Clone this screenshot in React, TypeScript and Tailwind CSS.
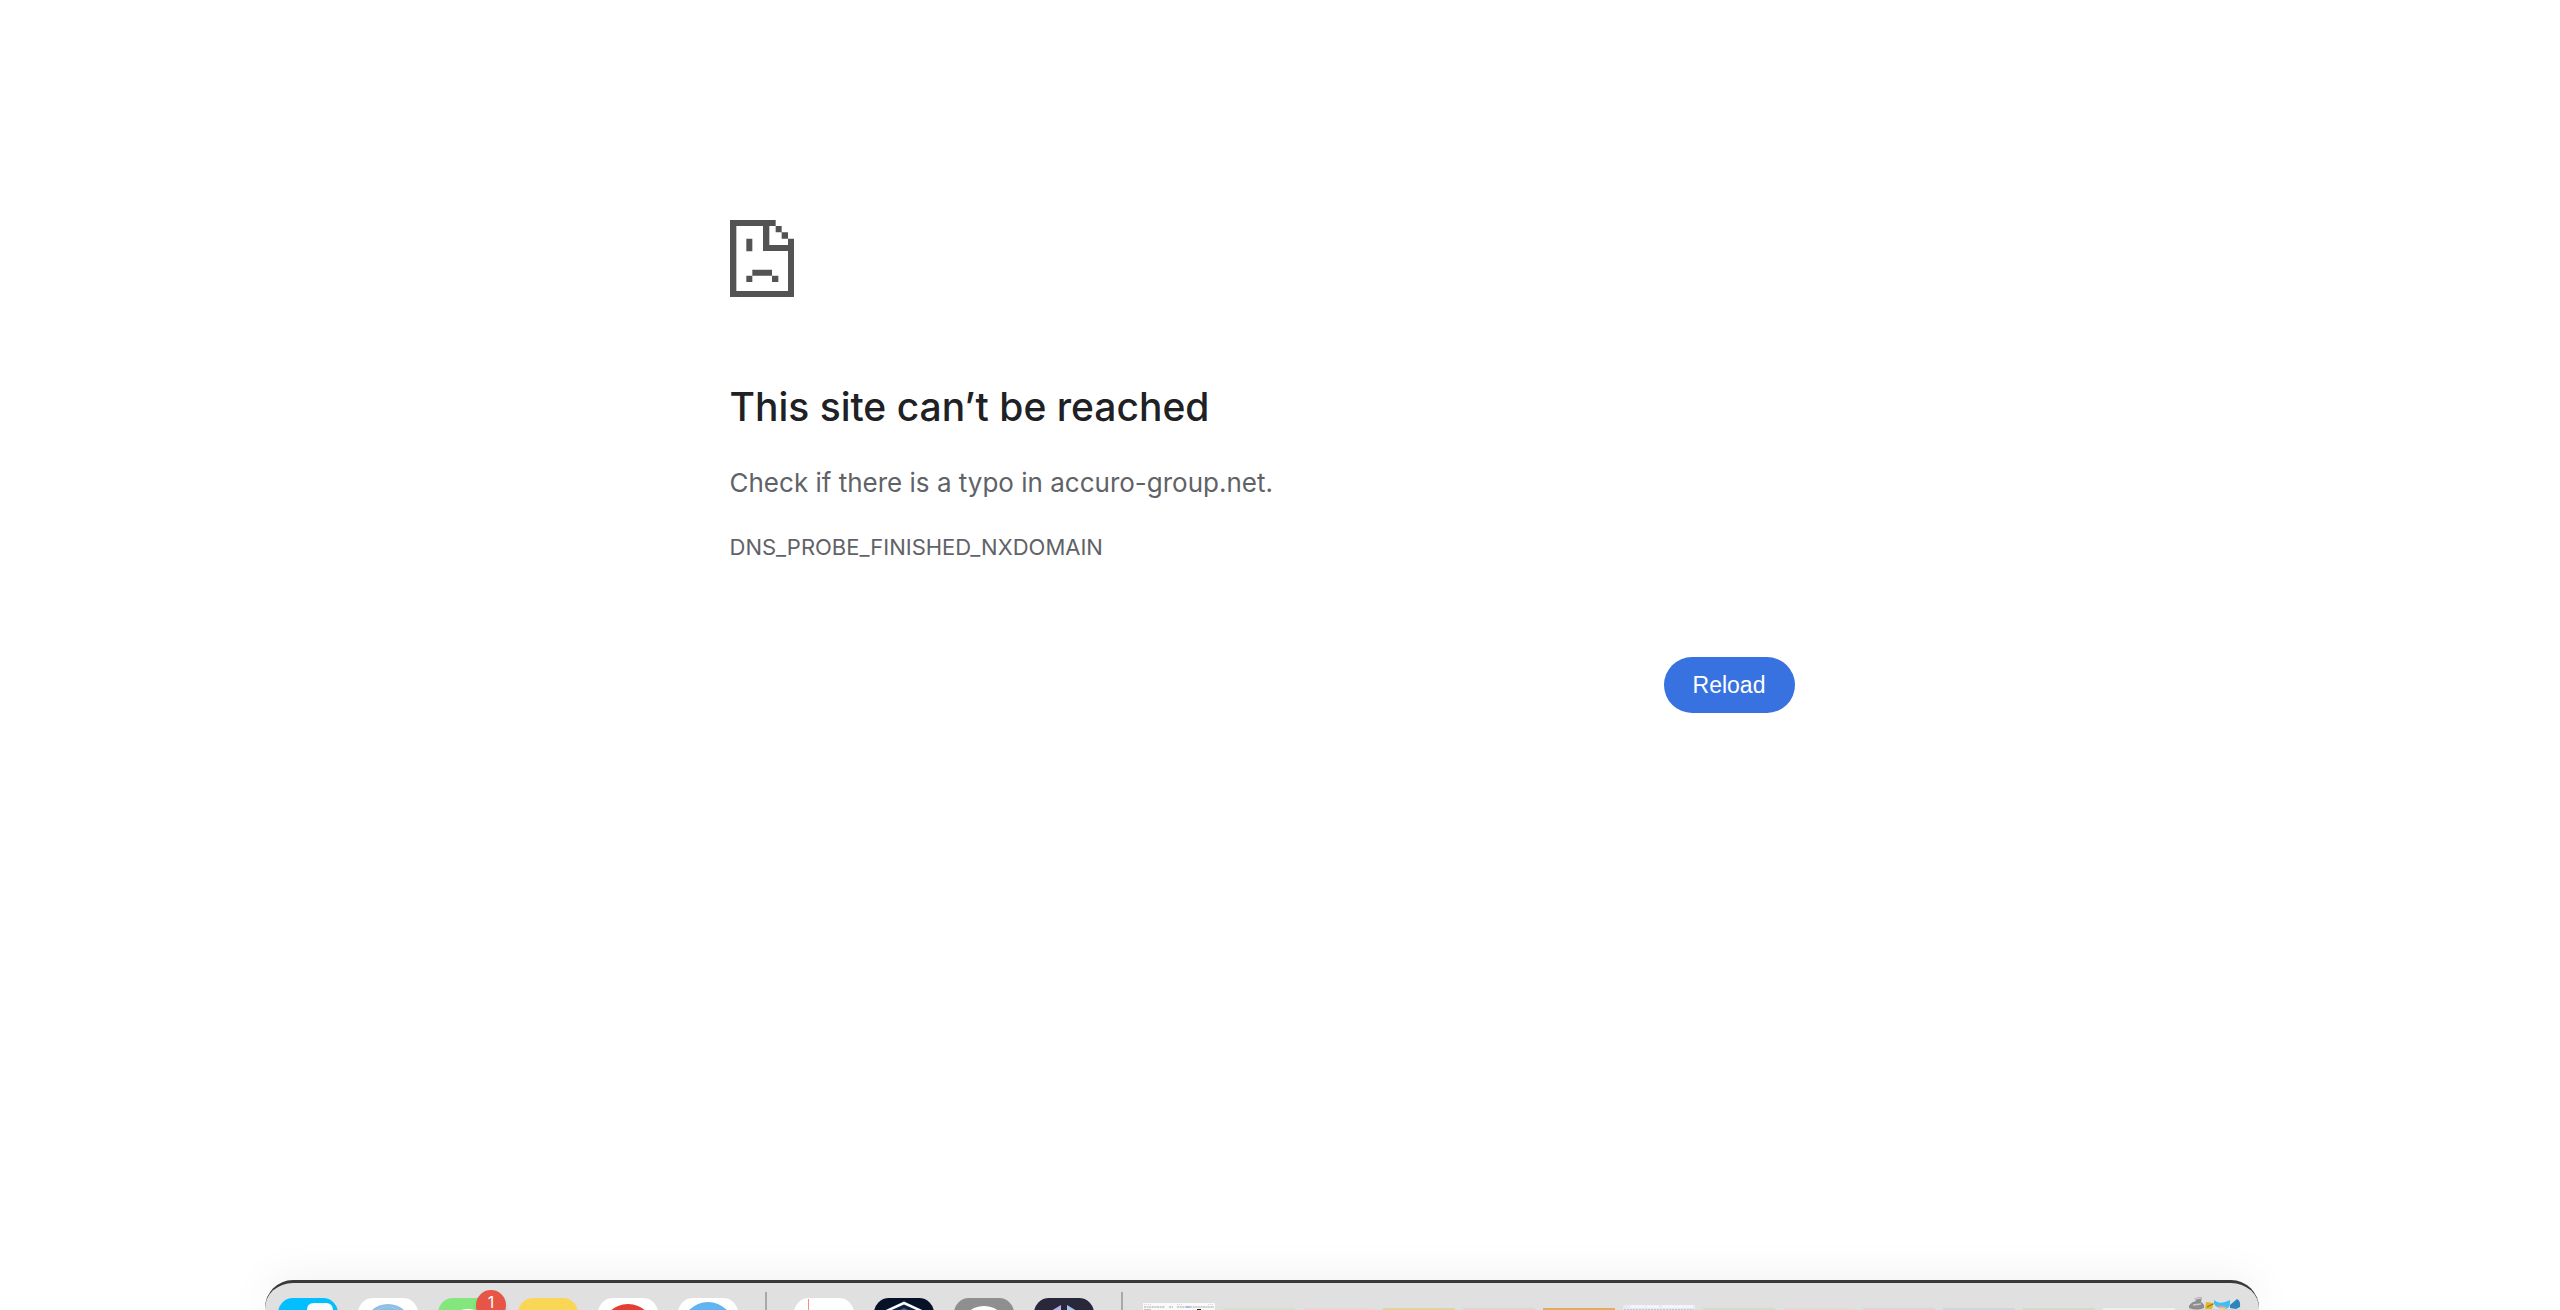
import type { ReactNode } from "react";

function SadPage() {
  return (
    <svg viewBox="0 0 192 231" className="h-[77px] w-16 fill-[#535353]" aria-hidden="true">
      <path d="M0 0H137V18H118V75H174V56H192V231H0ZM19 18V213H174V93H99V18Z" fillRule="evenodd" />
      <path d="M137 18H155V37H137ZM155 37H174V56H155Z" />
      <path d="M49 56H67V94H49ZM67 149H126V167H67ZM49 167H67V186H49ZM126 167H145V186H126Z" />
    </svg>
  );
}

function AppIcon({ label, fill, badge, children }: { label: string; fill: string; badge?: string; children?: ReactNode }) {
  return (
    <button type="button" aria-label={label} className="relative mt-[15px] block size-[60px] shrink-0">
      <svg viewBox="0 0 60 60" className="size-full" aria-hidden="true">
        <rect width="60" height="60" rx="15" fill={fill} />
        {children}
      </svg>
      {badge && (
        <span className="absolute -top-2 -right-2 flex size-[30px] justify-center rounded-full bg-[#e65545] pt-1 text-base leading-none text-white shadow-md">
          {badge}
        </span>
      )}
    </button>
  );
}

// minimized windows, left to right
const windows = [
  { name: "Mail", color: "bg-[#d4dfcd]" },
  { name: "Calendar", color: "bg-[#efd3d5]" },
  { name: "Stickies", color: "bg-[#e0d3a0]" },
  { name: "Photos", color: "bg-[#e4d2ce]" },
  { name: "Terminal", color: "bg-[#e4ac60]" },
];

const moreWindows = [
  { name: "Numbers", color: "bg-[#d2dccc]" },
  { name: "Pages", color: "bg-[#e8d8d3]" },
  { name: "Music", color: "bg-[#e4d1d5]" },
  { name: "Preview", color: "bg-[#d0d6df]" },
  { name: "Maps", color: "bg-[#d3dacb]" },
  { name: "Text", color: "bg-[#efefef]" },
];

function MiniWindow({ name, color }: { name: string; color: string }) {
  return <button type="button" aria-label={name} className={`mt-[25px] h-11 w-[72px] shrink-0 ${color}`} />;
}

function BrowserWindow() {
  return (
    <button type="button" aria-label="Browser window" className="mt-5 block h-12 w-[72px] shrink-0">
      <svg viewBox="0 0 72 48" className="size-full" aria-hidden="true">
        <rect width="72" height="48" fill="#fafafa" />
        <path d="M1 1.500H8M34 1.500H39M65 1.500H70" stroke="#d8d3cc" strokeDasharray="1 1" />
        <path d="M1 4H22M26 4H30M34 4H71" stroke="#cfcfd1" strokeWidth="2" strokeDasharray="2 .6" />
        <path d="M43 4H47" stroke="#9fc0f0" strokeWidth="2" />
        <path d="M1 6.500H8" stroke="#c4c4c6" />
        <path d="M54 6.500H58" stroke="#222" />
      </svg>
    </button>
  );
}

function SheetWindow() {
  return (
    <button type="button" aria-label="Sheet window" className="mt-[22px] block h-12 w-[72px] shrink-0">
      <svg viewBox="0 0 72 48" className="size-full" aria-hidden="true">
        <rect width="72" height="48" fill="#e8ecf2" />
        <path d="M7 1.500H22M24 1.500H36M39 1.500H70" stroke="#f6f8fb" strokeWidth="2" />
        <path d="M1 4.500H71" stroke="#bcc6d4" strokeDasharray="2 1" />
      </svg>
    </button>
  );
}

function Trash() {
  return (
    <button type="button" aria-label="Trash" className="mt-3.5 ml-auto block h-[60px] w-14 shrink-0">
      <svg viewBox="0 0 56 60" className="size-full" aria-hidden="true">
        <path d="M1 12L54 12L50 60H6Z" fill="#d4d4d4" />
        <path d="M2 9Q4 5 9 4L8 1L15 0L14 5Q18 7 17 11Q10 14 2 11Z" fill="#8d8d8d" />
        <path d="M7 2L15 1M6 8L14 7" stroke="#c9c9c9" strokeWidth="1.500" />
        <path d="M19 5L27 6L25 12H18Z" fill="#e2b52d" />
        <path d="M20 10L26 7" stroke="#80651c" />
        <path d="M27 3Q31 7 38 5L43 3Q44 10 39 12Q31 13 27 7Z" fill="#42bdf3" />
        <path d="M30 8Q34 10 39 8Q38 10 34 11Q31 10 30 8Z" fill="#e88fd0" />
        <path d="M31 10Q36 11 40 10L38 12H33Z" fill="#f6d84c" />
        <path d="M43 8L50 2Q54 4 53 10L49 12L43 11Z" fill="#2d86bb" />
      </svg>
    </button>
  );
}

function Dock() {
  return (
    <nav
      aria-label="Dock"
      className="mx-auto flex h-[30px] w-[79%] items-start rounded-t-[28px] border-t-[3px] border-[#3a3838] bg-[#e0e0e0] pr-4 pl-[13px] shadow-[0_0_44px_rgba(0,0,0,0.08)]"
    >
      <div className="flex gap-5">
        <AppIcon label="Finder" fill="#04bfff">
          <path d="M29 60V12Q29 5 36 5H48Q55 5 55 13V60Z" fill="#f8fcff" />
        </AppIcon>
        <AppIcon label="Safari" fill="#fff">
          <circle cx="30" cy="30" r="24" fill="#8bbfe5" />
          <circle cx="30" cy="30" r="21" fill="none" stroke="#b9dbf2" strokeDasharray="1 1.500" />
        </AppIcon>
        <AppIcon label="Messages" fill="#83e77e" badge="1">
          <ellipse cx="30" cy="30" rx="22" ry="19" fill="#fff" />
        </AppIcon>
        <AppIcon label="Notes" fill="#fad657" />
        <AppIcon label="Chrome" fill="#fff">
          <circle cx="30" cy="32" r="26" fill="#e33e31" />
        </AppIcon>
        <AppIcon label="App Store" fill="#fff">
          <circle cx="30" cy="30" r="26" fill="#62b3f1" />
        </AppIcon>
      </div>
      <div className="mx-[27px] mt-[9px] h-16 w-0.5 shrink-0 bg-[#a9a9a9]" />
      <div className="flex gap-5">
        <AppIcon label="Notebook" fill="#fff">
          <path d="M14.500 1V60" stroke="#f08f8f" />
        </AppIcon>
        <AppIcon label="Builder" fill="#071228">
          <path d="M30 5L54 16V44L30 56L6 44V16Z" fill="#0d2145" stroke="#fff" strokeWidth="2.500" />
          <path d="M30 10L36 13V17H24V13Z" fill="#51617b" />
        </AppIcon>
        <AppIcon label="Settings" fill="#8f8f8f">
          <circle cx="30" cy="32" r="24" fill="#fff" />
        </AppIcon>
        <AppIcon label="Studio" fill="#29273a">
          <path d="M27 7V20H17V13Z" fill="#b3b2ef" />
          <path d="M33 7V20H43V13Z" fill="#9ec8ee" />
        </AppIcon>
      </div>
      <div className="mt-[9px] mr-5 ml-[27px] h-16 w-0.5 shrink-0 bg-[#a9a9a9]" />
      <div className="flex gap-2">
        <BrowserWindow />
        {windows.map((w) => <MiniWindow key={w.name} {...w} />)}
        <SheetWindow />
        {moreWindows.map((w) => <MiniWindow key={w.name} {...w} />)}
      </div>
      <Trash />
    </nav>
  );
}

export default function App() {
  return (
    <div className="flex h-screen flex-col overflow-hidden bg-white pr-9 font-['Inter',sans-serif]">
      <main className="mx-auto w-full max-w-[1065px] grow pt-[220px]">
        <SadPage />
        <h1 className="mt-[84px] text-[39px] leading-[52px] font-medium text-[#202124]">This site can’t be reached</h1>
        <p className="mt-[30px] text-[26px] leading-10 text-[#5f6368]">Check if there is a typo in accuro-group.net.</p>
        <p className="mt-7 text-[22px] leading-8 text-[#5f6368]">DNS_PROBE_FINISHED_NXDOMAIN</p>
        <div className="mt-[94px] flex justify-end">
          <button type="button" className="h-14 w-[131px] rounded-full bg-[#3871e0] font-['Liberation_Sans',sans-serif] text-[23px] text-white">
            Reload
          </button>
        </div>
      </main>
      <Dock />
    </div>
  );
}
